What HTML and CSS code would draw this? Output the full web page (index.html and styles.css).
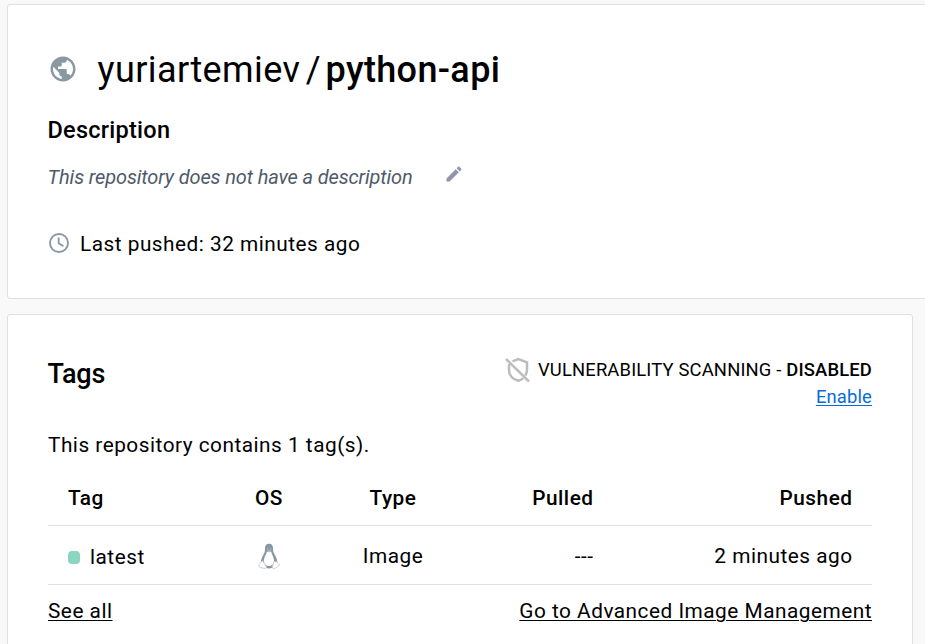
FILE: index.html
```html
<!DOCTYPE html>
<html lang="en">
<head>
<meta charset="utf-8">
<title>yuriartemiev/python-api</title>
<link rel="stylesheet" href="styles.css">
</head>
<body>
<section class="card summary">
  <div class="repo">
    <svg class="globe" viewBox="0 0 24 24"><path d="M12 2C6.48 2 2 6.48 2 12s4.48 10 10 10 10-4.480 10-10S17.520 2 12 2zm-1 17.930c-3.950-.49-7-3.850-7-7.930 0-.62.080-1.210.210-1.790L9 15v1c0 1.100.9 2 2 2v1.930zm6.900-2.540c-.26-.81-1-1.390-1.900-1.390h-1v-3c0-.55-.45-1-1-1H8v-2h2c.55 0 1-.45 1-1V7h2c1.100 0 2-.9 2-2v-.41c2.930 1.190 5 4.060 5 7.410 0 2.080-.8 3.970-2.100 5.390z"/></svg>
    <h1><span class="owner">yuriartemiev</span><span class="slash">/</span><span class="name">python-api</span></h1>
  </div>
  <h2>Description</h2>
  <div class="description">
    <em>This repository does not have a description</em>
    <svg class="pencil" viewBox="0 0 24 24"><path d="M3 17.250V21h3.750L17.810 9.940l-3.750-3.750L3 17.250zM20.710 7.040c.39-.39.39-1.020 0-1.410l-2.340-2.340c-.39-.39-1.020-.39-1.410 0l-1.830 1.830 3.750 3.750 1.830-1.830z"/></svg>
  </div>
  <div class="pushed">
    <svg class="clock" viewBox="0 0 20 20"><circle cx="10" cy="10" r="8.200"/><path d="M9.700 5v5.300l4.300 2.500"/></svg>
    <span>Last pushed: 32 minutes ago</span>
  </div>
</section>
<section class="card tags">
  <header>
    <h2 class="tags-title">Tags</h2>
    <div class="scan">
      <div class="scan-status">
        <svg class="shield" viewBox="0 0 26 26"><path d="M7.500 4.300L13.300 2l8.700 3.300v7.200c0 2.500-.6 4.300-1.700 6M4 7v6c0 5.500 3.800 9.500 9.300 10.800 1.900-.5 3.500-1.300 4.900-2.600M1 2l23 22.500"/></svg>
        <span class="scan-text">VULNERABILITY SCANNING - <b>DISABLED</b></span>
      </div>
      <a class="enable" href="#">Enable</a>
    </div>
  </header>
  <p>This repository contains 1 tag(s).</p>
  <div class="row head">
    <span class="first">Tag</span><span>OS</span><span>Type</span><span class="pulled">Pulled</span><span class="last">Pushed</span>
  </div>
  <div class="row">
    <span class="first tag"><i class="dot"></i>latest</span>
    <span class="os"><svg class="linux" viewBox="0 0 22 27"><path class="coat" d="M7 5C7 2.300 8.700.8 11 .8S15 2.300 15 5c0 3 .2 4.200 1.500 6.300 2 3.300 3.200 6 2.500 9.500L16 24.300c-2.800 1.500-7.200 1.500-10 0L3 20c-.4-3 .8-5.800 2.600-8.600C6.800 9.200 7 8 7 5z"/><path class="belly" d="M8.900 8.500c1.400 1.100 2.900 1.100 4.300 0 .3 3 2.900 5.400 2.900 9.500 0 2.600-1.700 5-5.100 5s-5.100-2.400-5.100-5c0-4.100 2.700-6.500 3-9.500z"/><path class="foot" d="M4.700 17.700l3.500 5.600c.7 1.500-.5 2.600-2 2.200L1.500 24c-.9-.4-.5-1.500-.4-2.600 0-1.200.5-1.500 1.500-1.800.8-.5 1-1.900 2.100-1.900zM16.200 18c1 1.200 1.900 1 2.800.3.500 2 1 2.700 2.300 3.300.5.700-.3 1.100-1 1.600l-3.500 2.400c-1.500.8-2.800-.2-2.600-1.800z"/><path class="face" d="M9 6h1m2 0h1M9.500 7.800l1.500.6 1.800-.7"/></svg></span>
    <span>Image</span><span class="pulled">---</span><span class="last">2 minutes ago</span>
  </div>
  <footer><a href="#">See all</a><a href="#">Go to Advanced Image Management</a></footer>
</section>
</body>
</html>
```
FILE: styles.css
```css
* { box-sizing: border-box; }
body {
  margin: 0;
  height: 644px;
  overflow: hidden;
  padding: 4px 0 0 7px;
  background: #f9f9f9;
  color: #000;
  font: 20.8px/30px Roboto, sans-serif;
  letter-spacing: 0.5px;
}
h1, h2, p { margin: 0; }
svg { display: block; flex: none; fill: none; }
a { color: inherit; text-underline-offset: 2px; text-decoration-thickness: 1px; }
.card { background: #fff; border: 1px solid #e0e0e0; border-radius: 3px; padding-left: 40px; }
.summary { width: 930px; height: 295px; padding-top: 40px; }
.repo { display: flex; align-items: center; height: 50px; }
.globe { width: 30px; height: 30px; margin-top: -2px; fill: #8899a3; }
.repo h1 { margin-left: 19.5px; font-size: 36px; font-weight: 400; line-height: 50px; letter-spacing: 0.4px; white-space: nowrap; }
.slash { margin: 0 4.5px 0 5.5px; }
.name { font-weight: 500; letter-spacing: 0.35px; }
.summary h2 { margin-top: 20px; margin-left: -0.5px; font-size: 23.5px; font-weight: 500; line-height: 30px; letter-spacing: 0.25px; }
.description { display: flex; align-items: center; height: 30px; margin-top: 17px; }
.description em { margin-left: -0.4px; font-size: 20px; color: #4f5a69; letter-spacing: -0.14px; }
.pencil { width: 20px; height: 20px; margin: -7px 0 0 31px; fill: #8f96aa; }
.pushed { display: flex; align-items: center; height: 30px; margin-top: 37px; }
.clock { width: 22px; height: 22px; margin: -2px 10px 0 0; stroke: #8899a3; stroke-width: 1.7; }
.tags { width: 906px; height: 360px; margin-top: 15px; padding-top: 40px; padding-right: 40px; }
.tags header { display: flex; justify-content: space-between; height: 75px; }
.tags-title { margin: 3px 0 0 -0.5px; font-size: 27px; font-weight: 500; line-height: 32px; letter-spacing: -0.2px; }
.scan { display: flex; flex-direction: column; align-items: flex-end; font-size: 18.4px; line-height: 27px; letter-spacing: 0.16px; }
.scan-status { display: flex; align-items: center; height: 28px; }
.shield { width: 26px; height: 26px; margin: 2px 7px 0 0; stroke: #bdbdbd; stroke-width: 2.5; }
.scan b { font-weight: 500; }
.enable { color: #086dd7; }
.row { display: grid; grid-template-columns: 166px 110px 138px 131.5px 278.5px; align-items: center; height: 59px; border-bottom: 1px solid #e0e0e0; text-align: center; }
.head { height: 66px; padding-top: 11px; font-weight: 500; }
.row .first { padding-left: 20px; text-align: left; }
.row .last { padding-right: 19.5px; text-align: right; }
.row .pulled { text-align: right; }
.row:not(.head) { padding-top: 2px; }
.row .tag { display: flex; align-items: center; padding-top: 2px; }
.dot { width: 12px; height: 13px; margin: 1px 10px 0 0; border-radius: 4px; background: #8ad6c1; }
.os { display: flex; justify-content: center; }
.linux { width: 22px; height: 27px; }
.coat { fill: #8798a2; }
.belly { fill: #fff; }
.foot { fill: #fff; stroke: #b5c0c6; stroke-width: .7; }
.face { stroke: #e4e9eb; stroke-width: .8; }
footer { display: flex; justify-content: space-between; padding-top: 11px; }
```
